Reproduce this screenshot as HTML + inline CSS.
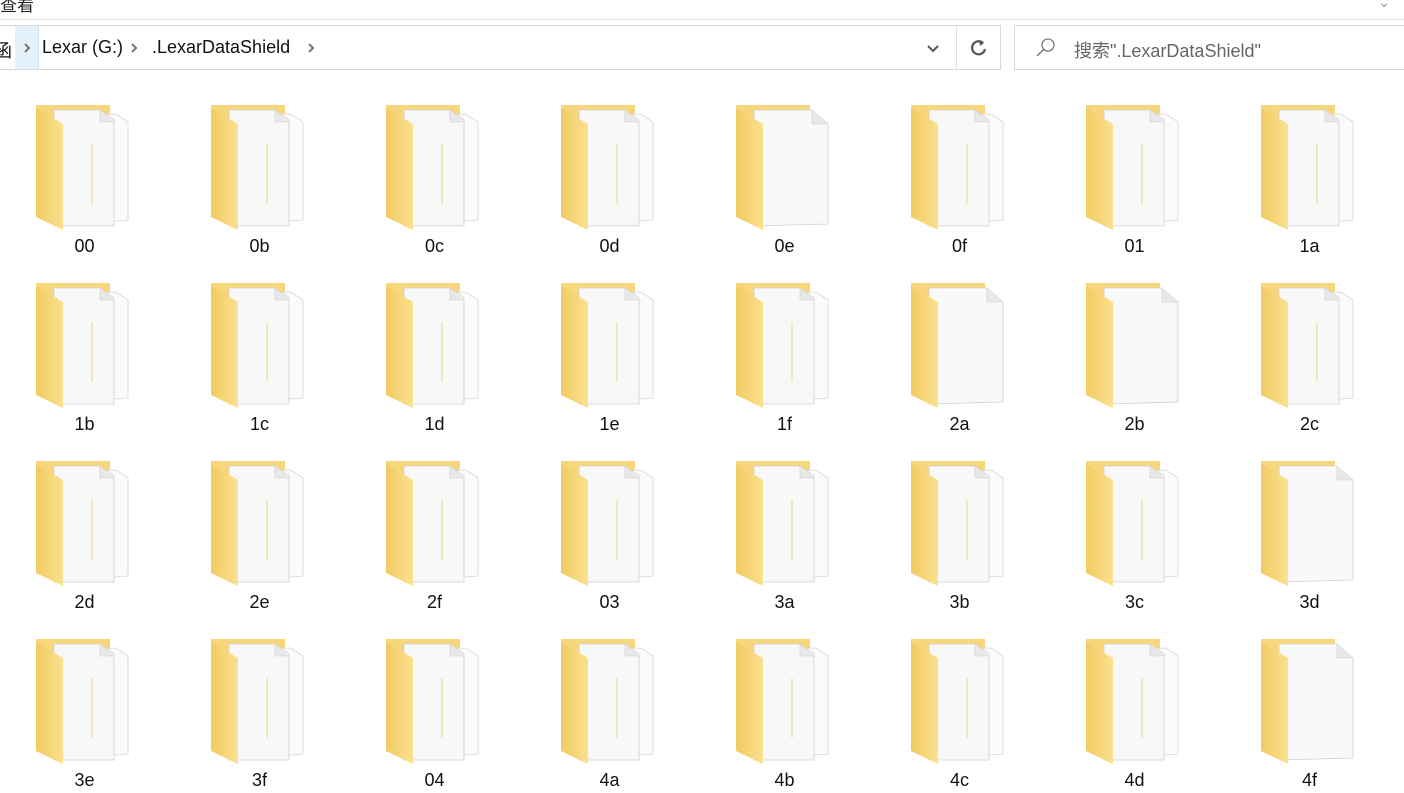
<!DOCTYPE html>
<html><head><meta charset="utf-8"><style>
body{margin:0;width:1404px;height:791px;overflow:hidden;background:#fff;font-family:"Liberation Sans","Noto Sans CJK SC",sans-serif;position:relative}
.top{position:absolute;left:0;top:-9px;font-size:17px;color:#222}
.hl{position:absolute;left:0;right:0;top:19px;height:1px;background:#e3e3e3}
.addr{position:absolute;left:-1px;top:25px;width:1002px;height:45px;border:1px solid #d9d9d9;box-sizing:border-box}
.search{position:absolute;left:1014px;top:25px;width:400px;height:45px;border:1px solid #d9d9d9;box-sizing:border-box}
.t{position:absolute;font-size:18px;color:#111;top:37px}
.item{position:absolute;width:175px;text-align:center;font-size:18px;color:#111}
.item svg{display:block;margin:0 0 0 39px}
.ch{position:absolute;top:42px}
</style></head><body>
<div class="top">查看</div>
<div style="position:absolute;right:14px;top:-6px;color:#999;font-size:14px">⌄</div>
<div class="hl"></div>
<div class="addr"></div>
<div style="position:absolute;left:15px;top:26px;width:23px;height:43px;background:#e5f1fb;border-right:1px solid #cde4f7"></div>
<div class="t" style="left:-6px">函</div>
<svg class="ch" style="left:23px" width="8" height="12"><path d="M2 2l4 4-4 4" stroke="#777" stroke-width="2" fill="none"/></svg>
<div class="t" style="left:42px">Lexar (G:)</div>
<svg class="ch" style="left:130px" width="8" height="12"><path d="M2 2l4 4-4 4" stroke="#777" stroke-width="2" fill="none"/></svg>
<div class="t" style="left:152px">.LexarDataShield</div>
<svg class="ch" style="left:307px" width="8" height="12"><path d="M2 2l4 4-4 4" stroke="#777" stroke-width="2" fill="none"/></svg>
<svg style="position:absolute;left:926px;top:44px" width="14" height="10"><path d="M2 2l5 5 5-5" stroke="#555" stroke-width="2" fill="none"/></svg>
<div style="position:absolute;left:956px;top:26px;width:1px;height:43px;background:#e0e0e0"></div>
<svg style="position:absolute;left:969px;top:38px" width="20" height="20"><path d="M14 5A6.5 6.5 0 1 0 16 11" stroke="#555" stroke-width="2.2" fill="none"/><path d="M10 2l5 3-4 3z" fill="#555"/></svg>
<div class="search"></div>
<svg style="position:absolute;left:1035px;top:37px" width="22" height="22"><circle cx="13" cy="8" r="6" stroke="#777" stroke-width="1.3" fill="none"/><path d="M9 12L2 19" stroke="#777" stroke-width="1.5"/></svg>
<div class="t" style="left:1074px;color:#666">搜索".LexarDataShield"</div>
<svg width="0" height="0" style="position:absolute">
<defs>
<linearGradient id="fg" x1="0" x2="1"><stop offset="0" stop-color="#f1cb63"/><stop offset="1" stop-color="#fbe08e"/></linearGradient>
<g id="m">
<polygon points="0,1 74,1 74,40 0,40" fill="#f8d77c"/>
<polygon points="30,12 80,10 92,18 92,116 42,120 30,118" fill="#fbfbfb" stroke="#d6d6d6" stroke-width="0.8"/>
<polygon points="18,6 64,6 78,16 78,122 18,122" fill="#f8f8f8" stroke="#d0d0d0" stroke-width="0.8"/>
<path d="M64 6v12h14" fill="#e8e8e8" stroke="#ccc" stroke-width="0.6"/>
<path d="M56 40v60" stroke="#f2e2a6" stroke-width="1.5"/>
<polygon points="0,4 27,20 27,126 0,113" fill="url(#fg)"/>
</g>
<g id="s">
<polygon points="0,1 74,1 74,40 0,40" fill="#f8d77c"/>
<polygon points="18,6 76,6 92,20 92,120 18,122" fill="#f9f9f9" stroke="#d0d0d0" stroke-width="0.8"/>
<path d="M76 6v14h16" fill="#e8e8e8" stroke="#ccc" stroke-width="0.6"/>
<polygon points="0,4 27,20 27,126 0,113" fill="url(#fg)"/>
</g>
</defs></svg>
<div id="grid"></div>
<script>
var names=["00","0b","0c","0d","0e","0f","01","1a","1b","1c","1d","1e","1f","2a","2b","2c","2d","2e","2f","03","3a","3b","3c","3d","3e","3f","04","4a","4b","4c","4d","4f"];
var single={"0e":1,"2a":1,"2b":1,"3d":1,"4f":1};
var h="";
names.forEach(function(n,i){var c=i%8,r=Math.floor(i/8);
h+='<div class="item" style="left:'+(c*175-3)+'px;top:'+(104+r*178)+'px"><svg width="104" height="128"><use href="#'+(single[n]?'s':'m')+'"/></svg><div style="margin-top:1px;line-height:26px">'+n+'</div></div>';});
document.getElementById('grid').innerHTML=h;
</script>
</body></html>
